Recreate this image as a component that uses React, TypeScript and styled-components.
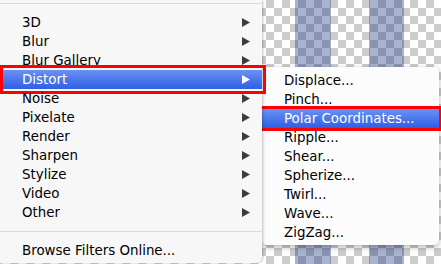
import styled, { createGlobalStyle } from 'styled-components';

const GlobalStyle = createGlobalStyle`
  html, body {
    margin: 0;
    padding: 0;
    background: #ffffff;
  }

  body {
    font-family: 'DejaVu Sans', 'Liberation Sans', sans-serif;
    font-size: 13.4px;
  }
`;

const mainItems = ['3D', 'Blur', 'Blur Gallery', 'Distort', 'Noise', 'Pixelate', 'Render', 'Sharpen', 'Stylize', 'Video', 'Other'];

const distortItems = ['Displace...', 'Pinch...', 'Polar Coordinates...', 'Ripple...', 'Shear...', 'Spherize...', 'Twirl...', 'Wave...', 'ZigZag...'];

const Arrow = ({ light }: { light?: boolean }) => (
  <svg width="8" height="9" viewBox="0 0 8 9">
    <polygon points="0,0 8,4.5 0,9" fill={light ? '#ffffff' : '#3c3c3c'} />
  </svg>
);

export default function App() {
  return (
    <>
      <GlobalStyle />
      <Scene>
        <FilterMenu>
          <TopRule />
          {mainItems.map((item) => (
            <MenuItem key={item} $active={item === 'Distort'} $marked={item === 'Distort'}>
              <span>{item}</span>
              <Arrow light={item === 'Distort'} />
            </MenuItem>
          ))}
          <Separator />
          <MenuItem>
            <span>Browse Filters Online...</span>
          </MenuItem>
        </FilterMenu>

        <SubMenu>
          {distortItems.map((item) => (
            <SubMenuItem key={item} $active={item === 'Polar Coordinates...'}>
              {item}
            </SubMenuItem>
          ))}
        </SubMenu>
      </Scene>
    </>
  );
}

const Scene = styled.div`
  width: 441px;
  height: 264px;
  overflow: hidden;
  display: flex;
  align-items: flex-start;

  background-color: #ffffff;
  background-image: linear-gradient(
      to right,
      transparent 0 295px,
      rgba(34, 60, 135, 0.39) 295px 331px,
      transparent 331px 369px,
      rgba(34, 60, 135, 0.39) 369px 404px,
      transparent 404px
    ),
    conic-gradient(#cccccc 25%, #ffffff 0 50%, #cccccc 0 75%, #ffffff 0);
  background-size: 100% 100%, 16px 16px;
  background-position: 0 0, 2px 0;
`;

const FilterMenu = styled.div`
  position: relative;
  z-index: 2;
  width: 262px;
  height: 263px;
  box-sizing: border-box;
  padding-top: 3px;

  display: flex;
  flex-direction: column;

  background: #f7f7f7;
  border-radius: 0 0 6px 0;
  box-shadow: 1px 0 3px rgba(0, 0, 0, 0.25);
`;

const TopRule = styled.div`
  height: 1px;
  background: #dcdcdc;
  margin-bottom: 9px;
`;

const Separator = styled.div`
  height: 1px;
  background: #d8d8d8;
  margin: 9px 0;
`;

const MenuItem = styled.div<{ $active?: boolean; $marked?: boolean }>`
  position: relative;
  height: 19px;
  padding: 0 12px 0 22px;

  display: flex;
  align-items: center;
  justify-content: space-between;

  color: ${(p) => (p.$active ? '#ffffff' : '#000000')};
  background: ${(p) => (p.$active ? 'linear-gradient(#6b91f3, #2e5fe6)' : 'transparent')};
  white-space: nowrap;

  &::after {
    content: '';
    display: ${(p) => (p.$marked ? 'block' : 'none')};
    position: absolute;
    top: -5px;
    bottom: -5px;
    left: 0;
    right: -4px;
    border: 3px solid #ff0000;
  }
`;

const SubMenu = styled.div`
  position: relative;
  z-index: 1;
  width: 177px;
  margin-top: 67px;
  padding: 4px 0 3px;

  display: flex;
  flex-direction: column;

  background: #fcfcfc;
  border-radius: 0 5px 5px 5px;
  box-shadow: 0 2px 6px rgba(0, 0, 0, 0.3);
`;

const SubMenuItem = styled.div<{ $active?: boolean }>`
  position: relative;
  height: 19px;
  padding-left: 22px;

  display: flex;
  align-items: center;

  color: ${(p) => (p.$active ? '#ffffff' : '#000000')};
  background: ${(p) => (p.$active ? 'linear-gradient(#6b91f3, #2e5fe6)' : 'transparent')};
  white-space: nowrap;

  &::after {
    content: '';
    display: ${(p) => (p.$active ? 'block' : 'none')};
    position: absolute;
    top: -3px;
    bottom: -3px;
    left: -4px;
    right: -3px;
    border: 3px solid #ff0000;
  }
`;
